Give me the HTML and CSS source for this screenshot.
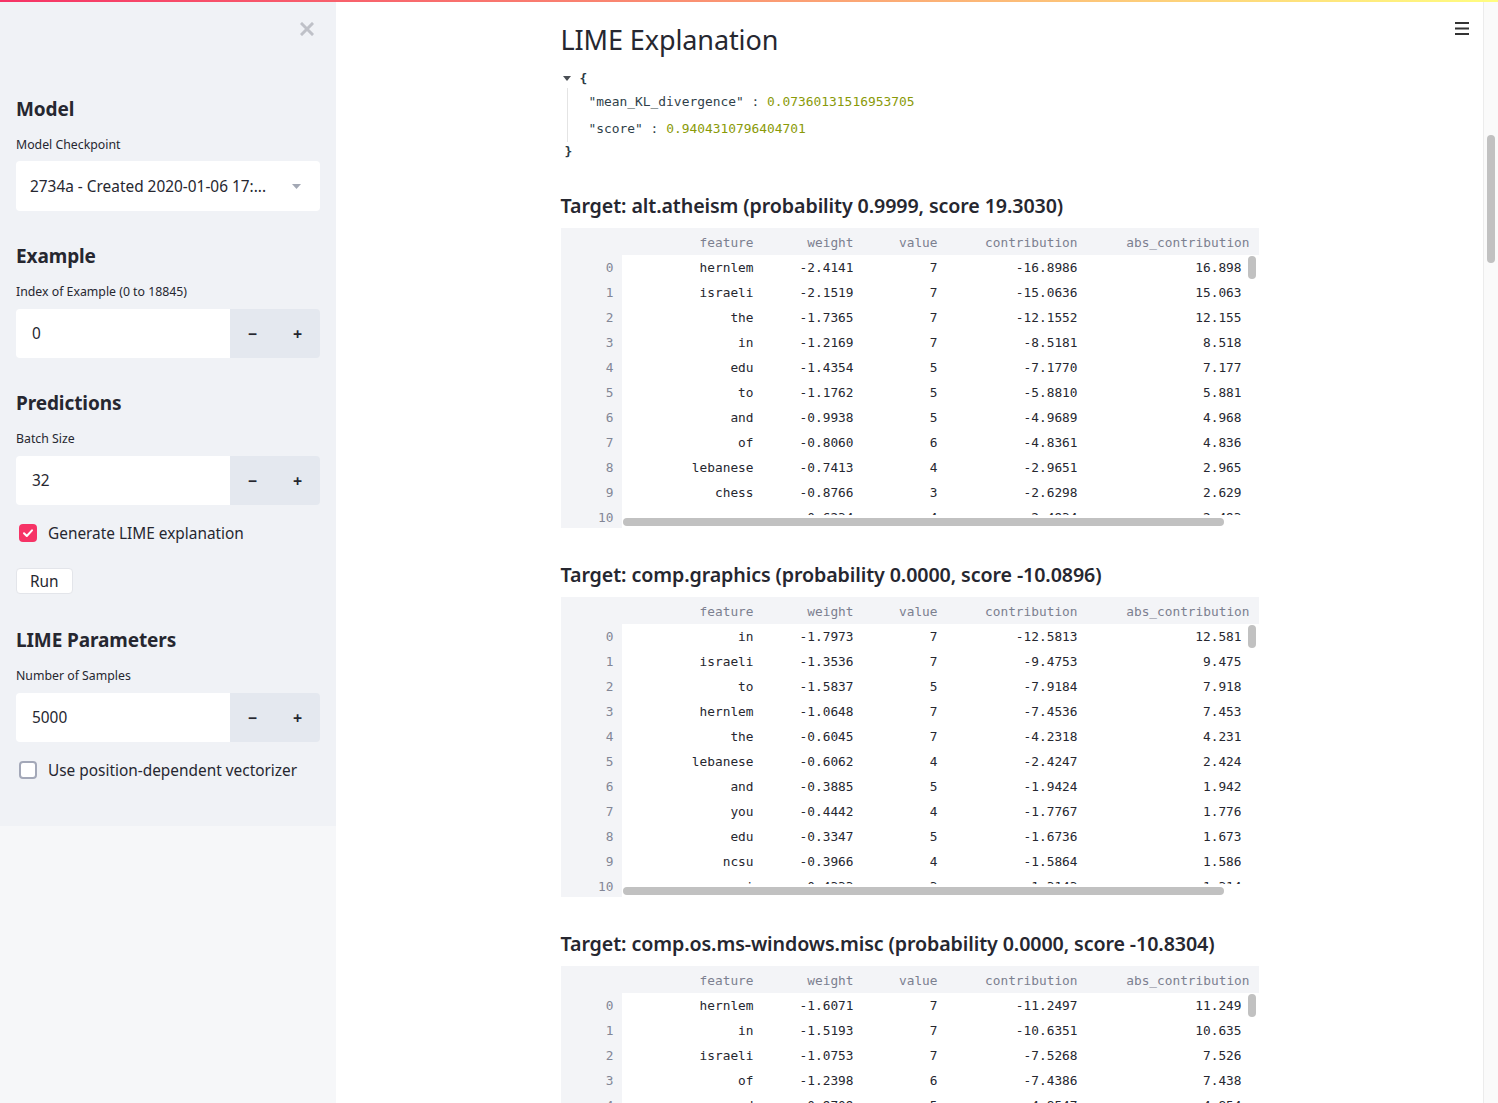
FILE: index.html
```html
<!DOCTYPE html>
<html lang="en">
<head>
<meta charset="utf-8">
<title>LIME Explanation</title>
<link rel="stylesheet" href="styles.css">
</head>
<body>
<div class="decoration"></div>
<div class="app">
  <aside class="sidebar">
    <div class="sb-content">
      <div class="sb-close">
        <svg width="14" height="14" viewBox="0 0 14 14"><path d="M2 2 L12 12 M12 2 L2 12" stroke="#bfc1c8" stroke-width="3" stroke-linecap="square"/></svg>
      </div>
      <h2 class="sb-h sb-first">Model</h2>
      <div class="sb-label">Model Checkpoint</div>
      <div class="select">
        <span class="select-text">2734a - Created 2020-01-06 17:...</span>
        <svg class="caret" width="9" height="5" viewBox="0 0 9 5"><path d="M0 0 H9 L4.5 5 Z" fill="#a3a8b4"/></svg>
      </div>

      <h2 class="sb-h">Example</h2>
      <div class="sb-label">Index of Example (0 to 18845)</div>
      <div class="numinput">
        <div class="num-val">0</div>
        <div class="num-btn">&minus;</div>
        <div class="num-btn">+</div>
      </div>

      <h2 class="sb-h">Predictions</h2>
      <div class="sb-label">Batch Size</div>
      <div class="numinput">
        <div class="num-val">32</div>
        <div class="num-btn">&minus;</div>
        <div class="num-btn">+</div>
      </div>
      <div class="check-row">
        <span class="checkbox checked">
          <svg width="18" height="18" viewBox="0 0 18 18"><path d="M5 9.2 L7.8 12 L13 6.3" fill="none" stroke="#fff" stroke-width="2" stroke-linecap="round" stroke-linejoin="round"/></svg>
        </span>
        <span class="check-label">Generate LIME explanation</span>
      </div>
      <div class="btn-row"><span class="btn">Run</span></div>

      <h2 class="sb-h sb-lime">LIME Parameters</h2>
      <div class="sb-label">Number of Samples</div>
      <div class="numinput">
        <div class="num-val">5000</div>
        <div class="num-btn">&minus;</div>
        <div class="num-btn">+</div>
      </div>
      <div class="check-row">
        <span class="checkbox"></span>
        <span class="check-label">Use position-dependent vectorizer</span>
      </div>
    </div>
  </aside>

  <main class="main">
    <div class="menu">
      <svg width="14" height="13" viewBox="0 0 14 13"><rect x="0" y="0" width="14" height="2" fill="#333"/><rect x="0" y="5.5" width="14" height="2" fill="#333"/><rect x="0" y="11" width="14" height="2" fill="#333"/></svg>
    </div>
    <div class="block">
      <h1 class="title">LIME Explanation</h1>

      <div class="json">
        <div class="json-open">
          <svg class="json-tri" width="8" height="5" viewBox="0 0 8 5"><path d="M0 0 H8 L4 5 Z" fill="#4a4f55"/></svg>
          <span class="brace">{</span>
        </div>
        <div class="json-body">
          <div class="json-row"><span class="jkey">"mean_KL_divergence"</span><span class="jcolon"> : </span><span class="jnum">0.07360131516953705</span></div>
          <div class="json-row"><span class="jkey">"score"</span><span class="jcolon"> : </span><span class="jnum">0.9404310796404701</span></div>
        </div>
        <div class="json-close"><span class="brace">}</span></div>
      </div>

      <section class="target first">
        <h3 class="target-h">Target: alt.atheism (probability 0.9999, score 19.3030)</h3>
        <div class="df">
          <div class="df-head">
            <span></span><span>feature</span><span>weight</span><span>value</span><span>contribution</span><span>abs_contribution</span>
          </div>
          <div class="df-body">
            <div class="df-index">
              <span>0</span><span>1</span><span>2</span><span>3</span><span>4</span><span>5</span><span>6</span><span>7</span><span>8</span><span>9</span><span>10</span>
            </div>
            <div class="df-view">
              <div class="df-rows">
                <div class="df-row"><span>hernlem</span><span>-2.4141</span><span>7</span><span>-16.8986</span><span>16.898</span></div>
                <div class="df-row"><span>israeli</span><span>-2.1519</span><span>7</span><span>-15.0636</span><span>15.063</span></div>
                <div class="df-row"><span>the</span><span>-1.7365</span><span>7</span><span>-12.1552</span><span>12.155</span></div>
                <div class="df-row"><span>in</span><span>-1.2169</span><span>7</span><span>-8.5181</span><span>8.518</span></div>
                <div class="df-row"><span>edu</span><span>-1.4354</span><span>5</span><span>-7.1770</span><span>7.177</span></div>
                <div class="df-row"><span>to</span><span>-1.1762</span><span>5</span><span>-5.8810</span><span>5.881</span></div>
                <div class="df-row"><span>and</span><span>-0.9938</span><span>5</span><span>-4.9689</span><span>4.968</span></div>
                <div class="df-row"><span>of</span><span>-0.8060</span><span>6</span><span>-4.8361</span><span>4.836</span></div>
                <div class="df-row"><span>lebanese</span><span>-0.7413</span><span>4</span><span>-2.9651</span><span>2.965</span></div>
                <div class="df-row"><span>chess</span><span>-0.8766</span><span>3</span><span>-2.6298</span><span>2.629</span></div>
                <div class="df-row"><span>you</span><span>-0.6234</span><span>4</span><span>-2.4934</span><span>2.493</span></div>
              </div>
              <div class="vscroll"><div class="vthumb"></div></div>
              <div class="hscroll"><div class="hthumb"></div></div>
            </div>
          </div>
        </div>
      </section>

      <section class="target">
        <h3 class="target-h">Target: comp.graphics (probability 0.0000, score -10.0896)</h3>
        <div class="df">
          <div class="df-head">
            <span></span><span>feature</span><span>weight</span><span>value</span><span>contribution</span><span>abs_contribution</span>
          </div>
          <div class="df-body">
            <div class="df-index">
              <span>0</span><span>1</span><span>2</span><span>3</span><span>4</span><span>5</span><span>6</span><span>7</span><span>8</span><span>9</span><span>10</span>
            </div>
            <div class="df-view">
              <div class="df-rows">
                <div class="df-row"><span>in</span><span>-1.7973</span><span>7</span><span>-12.5813</span><span>12.581</span></div>
                <div class="df-row"><span>israeli</span><span>-1.3536</span><span>7</span><span>-9.4753</span><span>9.475</span></div>
                <div class="df-row"><span>to</span><span>-1.5837</span><span>5</span><span>-7.9184</span><span>7.918</span></div>
                <div class="df-row"><span>hernlem</span><span>-1.0648</span><span>7</span><span>-7.4536</span><span>7.453</span></div>
                <div class="df-row"><span>the</span><span>-0.6045</span><span>7</span><span>-4.2318</span><span>4.231</span></div>
                <div class="df-row"><span>lebanese</span><span>-0.6062</span><span>4</span><span>-2.4247</span><span>2.424</span></div>
                <div class="df-row"><span>and</span><span>-0.3885</span><span>5</span><span>-1.9424</span><span>1.942</span></div>
                <div class="df-row"><span>you</span><span>-0.4442</span><span>4</span><span>-1.7767</span><span>1.776</span></div>
                <div class="df-row"><span>edu</span><span>-0.3347</span><span>5</span><span>-1.6736</span><span>1.673</span></div>
                <div class="df-row"><span>ncsu</span><span>-0.3966</span><span>4</span><span>-1.5864</span><span>1.586</span></div>
                <div class="df-row"><span>i</span><span>-0.4333</span><span>3</span><span>-1.3143</span><span>1.314</span></div>
              </div>
              <div class="vscroll"><div class="vthumb"></div></div>
              <div class="hscroll"><div class="hthumb"></div></div>
            </div>
          </div>
        </div>
      </section>

      <section class="target">
        <h3 class="target-h">Target: comp.os.ms-windows.misc (probability 0.0000, score -10.8304)</h3>
        <div class="df">
          <div class="df-head">
            <span></span><span>feature</span><span>weight</span><span>value</span><span>contribution</span><span>abs_contribution</span>
          </div>
          <div class="df-body">
            <div class="df-index">
              <span>0</span><span>1</span><span>2</span><span>3</span><span>4</span>
            </div>
            <div class="df-view">
              <div class="df-rows">
                <div class="df-row"><span>hernlem</span><span>-1.6071</span><span>7</span><span>-11.2497</span><span>11.249</span></div>
                <div class="df-row"><span>in</span><span>-1.5193</span><span>7</span><span>-10.6351</span><span>10.635</span></div>
                <div class="df-row"><span>israeli</span><span>-1.0753</span><span>7</span><span>-7.5268</span><span>7.526</span></div>
                <div class="df-row"><span>of</span><span>-1.2398</span><span>6</span><span>-7.4386</span><span>7.438</span></div>
                <div class="df-row"><span>and</span><span>-0.9709</span><span>5</span><span>-4.8547</span><span>4.854</span></div>
              </div>
              <div class="vscroll"><div class="vthumb"></div></div>
              <div class="hscroll"><div class="hthumb"></div></div>
            </div>
          </div>
        </div>
      </section>
    </div>
  </main>

  <div class="pagebar"><div class="pagethumb"></div></div>
</div>
</body>
</html>
```

FILE: styles.css
```css
html, body {
  margin: 0;
  padding: 0;
  height: 100%;
  overflow: hidden;
}
body {
  font-family: "Noto Sans", "Open Sans", sans-serif;
  color: #262730;
  background: #ffffff;
  position: relative;
}
.decoration {
  position: absolute;
  top: 0;
  left: 0;
  right: 0;
  height: 2px;
  background: linear-gradient(90deg, #f63366, #fffd80);
  z-index: 10;
}
.app {
  display: flex;
  height: 100%;
}

/* Sidebar */
.sidebar {
  width: 336px;
  flex: none;
  background: #f6f7f9;
  height: 100%;
}
.sb-content {
  background: #f0f2f6;
  padding: 0 16px 44px 16px;
}
.sb-close {
  height: 58px;
  display: flex;
  justify-content: flex-end;
  align-items: center;
  padding-right: 6px;
}
.sb-close svg { display: block; }
.sb-h {
  margin: 33px 0 0 0;
  font-size: 19px;
  font-weight: 700;
  line-height: 24px;
  letter-spacing: -0.1px;
}
.sb-h.sb-first { margin-top: 39px; }
.sb-h.sb-lime { margin-top: 34px; }
.sb-label {
  margin-top: 16px;
  font-size: 12.3px;
  line-height: 16px;
}
.select {
  margin-top: 8px;
  height: 50px;
  background: #ffffff;
  border-radius: 4px;
  display: flex;
  align-items: center;
  padding: 0 19px 0 14px;
  font-size: 15.4px;
}
.select-text { flex: 1; }
.caret { display: block; }
.numinput {
  margin-top: 9px;
  height: 49px;
  display: flex;
  border-radius: 4px;
  overflow: hidden;
}
.num-val {
  flex: 1;
  background: #ffffff;
  display: flex;
  align-items: center;
  padding-left: 16px;
  font-size: 15.4px;
}
.num-btn {
  width: 45px;
  background: #e4e8ef;
  display: flex;
  align-items: center;
  justify-content: center;
  font-size: 16px;
  font-weight: 700;
}
.check-row {
  margin-top: 16px;
  height: 24px;
  display: flex;
  align-items: center;
}
.checkbox {
  width: 18px;
  height: 18px;
  box-sizing: border-box;
  margin-left: 3px;
  border-radius: 4px;
  border: 2px solid #a3a8b8;
  background: #ffffff;
  display: flex;
  align-items: center;
  justify-content: center;
}
.checkbox.checked {
  background: #f63366;
  border: none;
}
.checkbox svg { display: block; }
.check-label {
  margin-left: 11px;
  font-size: 15.4px;
}
.btn-row {
  margin-top: 23px;
  display: flex;
}
.btn {
  height: 26px;
  box-sizing: border-box;
  padding: 0 13px;
  background: #ffffff;
  border: 1px solid #e3e5ea;
  border-radius: 4px;
  display: flex;
  align-items: center;
  font-size: 15.4px;
}

/* Main */
.main {
  flex: 1;
  position: relative;
  overflow: hidden;
  height: 100%;
}
.menu {
  position: absolute;
  top: 22px;
  right: 14px;
}
.menu svg { display: block; }
.block {
  width: 698px;
  margin: 0 auto;
  padding-top: 24px;
}
.title {
  margin: 0;
  font-size: 27px;
  font-weight: 400;
  line-height: 32px;
  letter-spacing: -0.1px;
}
.json {
  margin-top: 12px;
  font-family: "DejaVu Sans Mono", "Liberation Mono", monospace;
  font-size: 12.9px;
}
.json-open {
  height: 20px;
  display: flex;
  align-items: center;
}
.json-tri {
  display: block;
  margin-left: 2px;
  margin-right: 9px;
}
.brace {
  font-weight: 700;
  color: #2b3b45;
}
.json-body {
  margin-left: 6px;
  border-left: 1px solid #e4e4e4;
  padding-left: 21px;
}
.json-row {
  height: 27px;
  display: flex;
  align-items: center;
  white-space: pre;
}
.jkey { color: #2f3f4a; }
.jcolon { color: #2f3f4a; }
.jnum { color: #8a9a08; }
.json-close {
  height: 19px;
  display: flex;
  align-items: center;
  padding-left: 4px;
}

.target { margin-top: 35px; }
.target.first { margin-top: 33px; }
.target-h {
  margin: 0;
  font-size: 19.65px;
  font-weight: 600;
  line-height: 24px;
  letter-spacing: -0.1px;
}
.df {
  margin-top: 10px;
  height: 300px;
  background: #f3f4f7;
  font-family: "DejaVu Sans Mono", "Liberation Mono", monospace;
  font-size: 12.8px;
  display: flex;
  flex-direction: column;
  overflow: hidden;
}
.df-head {
  height: 27px;
  box-sizing: border-box;
  padding-top: 1px;
  flex: none;
  display: grid;
  grid-template-columns: 61px 140px 100px 84px 140px 172px;
  align-items: center;
  color: #7c8090;
}
.df-head span {
  text-align: right;
  padding-right: 8px;
}
.df-body {
  flex: 1;
  display: flex;
  min-height: 0;
}
.df-index {
  width: 61px;
  flex: none;
  color: #828696;
  display: flex;
  flex-direction: column;
}
.df-index span {
  height: 25px;
  flex: none;
  line-height: 25px;
  text-align: right;
  padding-right: 8px;
}
.df-view {
  flex: 1;
  background: #ffffff;
  position: relative;
  overflow: hidden;
}
.df-rows {
  width: 636px;
}
.df-row {
  height: 25px;
  display: grid;
  grid-template-columns: 140px 100px 84px 140px 172px;
  align-items: center;
}
.df-row span {
  text-align: right;
  padding-right: 8px;
}
.df-row span:last-child {
  padding-right: 16px;
}
.vscroll {
  position: absolute;
  top: 0;
  right: 0;
  bottom: 13px;
  width: 13px;
  background: #ffffff;
}
.vthumb {
  margin: 1px 0 0 2px;
  width: 8px;
  height: 23px;
  border-radius: 4px;
  background: #c1c1c1;
}
.hscroll {
  position: absolute;
  left: 0;
  right: 0;
  bottom: 0;
  height: 13px;
  background: #ffffff;
}
.hthumb {
  margin: 3px 0 0 1px;
  width: 601px;
  height: 8px;
  border-radius: 4px;
  background: #c1c1c1;
}

/* Page scrollbar */
.pagebar {
  width: 14px;
  flex: none;
  height: 100%;
  background: #fafafa;
  border-left: 1px solid #ececec;
}
.pagethumb {
  margin: 135px 0 0 3px;
  width: 8px;
  height: 128px;
  border-radius: 4px;
  background: #c1c1c1;
}
```
